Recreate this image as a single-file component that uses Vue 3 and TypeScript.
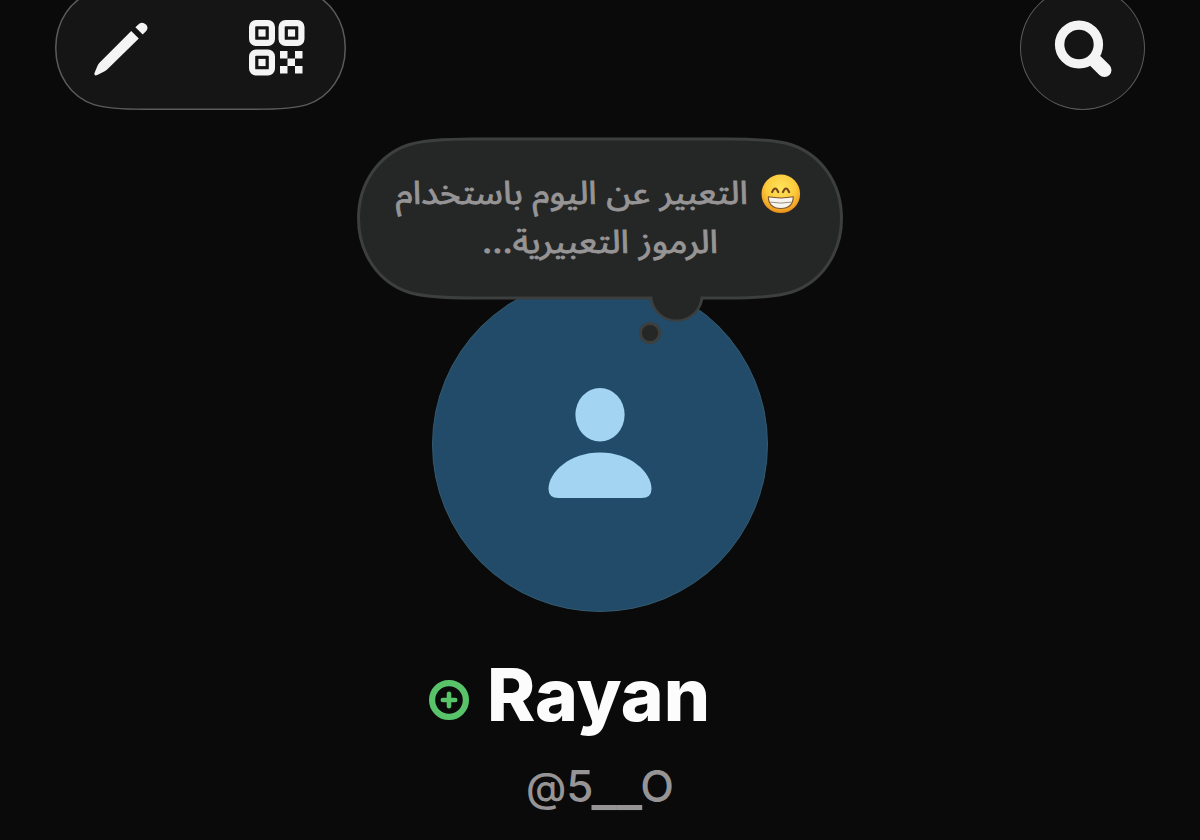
<script setup lang="ts">
interface BubbleLine {
  text: string
  x: number
  y: number
  width: number
}

const displayName: string = 'Rayan'
const bubbleLines: BubbleLine[] = [
  { text: 'التعبير عن اليوم باستخدام', x: 214.8, y: 66.5, width: 352 },
  { text: 'الرموز التعبيرية...', x: 243, y: 115.5, width: 236 },
]
const finderOrigins: [number, number][] = [[0, 0], [29.5, 0], [0, 29.5]]
const dataCells: [number, number][] = [[31, 31], [46, 31], [38.5, 38.5], [31, 46], [46, 46]]
</script>

<template>
  <main class="screen">
    <header class="toolbar">
      <div class="actions">
        <svg class="outline" viewBox="0 0 291 124" aria-hidden="true">
          <path d="M.75 62C.75 35 16 13 39 5.4Q53 .75 90 .75H201Q238 .75 252 5.4C275 13 290.25 35 290.25 62S275 111 252 118.6Q238 123.25 201 123.25H90Q53 123.25 39 118.6C16 111 .75 89 .75 62Z" />
        </svg>
        <button class="tool" aria-label="Edit">
          <svg width="56" height="56" viewBox="0 0 56 56" fill="#f4f4f4">
            <path d="M38.2 11L45.8 18.4L14.4 49.2Q13 50.6 11.2 51.5L4.3 55Q1 56.4 1.4 53.2L4.1 46.8Q5 44.3 6.5 42.7Z" />
            <path d="M42.4 7.2L46.2 3.8Q49.5 1.2 52.9 4.4Q56 7.6 53.2 10.9L49.7 14.4Z" />
          </svg>
        </button>
        <button class="tool" aria-label="QR code">
          <svg width="56" height="56" viewBox="0 0 56 56" fill="#f4f4f4">
            <g v-for="([x, y], i) in finderOrigins" :key="i" :transform="`translate(${x} ${y})`">
              <rect x="3.1" y="3.1" width="19.8" height="19.8" rx="4" fill="none" stroke="#f4f4f4" stroke-width="6.2" />
              <rect x="9.4" y="9.4" width="7.2" height="7.2" />
            </g>
            <rect v-for="([x, y], i) in dataCells" :key="`c${i}`" :x="x" :y="y" width="7.5" height="7.5" />
          </svg>
        </button>
      </div>
      <button class="search" aria-label="Search">
        <svg width="60" height="60" viewBox="0 0 60 60" fill="none" stroke="#f4f4f4">
          <circle cx="26" cy="26.5" r="19.4" stroke-width="9.4" />
          <path d="M42.8 43.5L51.4 52" stroke-width="14.2" stroke-linecap="round" />
        </svg>
      </button>
    </header>

    <section class="profile">
      <svg class="bubble" width="486" height="208" viewBox="0 0 486 208">
        <defs>
          <radialGradient id="face" cx=".5" cy=".35" r=".68">
            <stop offset="0" stop-color="#ffe45b" />
            <stop offset=".55" stop-color="#fccb3d" />
            <stop offset=".85" stop-color="#f0a324" />
            <stop offset="1" stop-color="#dd7d18" />
          </radialGradient>
        </defs>
        <circle cx="319.5" cy="157.5" r="25.6" class="cloud" />
        <path class="cloud" d="M1.5 81.5C1.5 46 22 18 51 8Q69 2 116 2H370Q417 2 435 8C464 18 484.5 46 484.5 81.5S464 145 435 155Q417 161 370 161H116Q69 161 51 155C22 145 1.5 117 1.5 81.5Z" />
        <path class="cloud-fill" d="M295.4 158.5A24.1 24.1 0 0 0 343.6 158.5V150H295.4Z" />
        <circle cx="293" cy="196" r="9.6" class="cloud" />
        <text
          v-for="line in bubbleLines"
          :key="line.y"
          class="prompt"
          :x="line.x"
          :y="line.y"
          :textLength="line.width"
          lengthAdjust="spacingAndGlyphs"
          text-anchor="middle"
          direction="rtl"
        >{{ line.text }}</text>
        <g transform="translate(404.5 37.5)">
          <circle cx="19.3" cy="19.3" r="19.3" fill="url(#face)" />
          <path d="M10.6 17.6Q13.7 10.4 16.8 17.6M21.4 17.6Q24.5 10.4 27.6 17.6" fill="none" stroke="#75451d" stroke-width="2.2" stroke-linecap="round" />
          <path d="M6.8 22.3Q19.3 24.6 31.8 22.3Q31.5 34 19.3 34Q7.1 34 6.8 22.3Z" fill="#f7f5ee" stroke="#80552a" stroke-width="1.1" stroke-linejoin="round" />
          <path d="M8.5 27.6Q19.3 29.6 30.1 27.6" fill="none" stroke="#998f80" stroke-width="1" />
        </g>
      </svg>
      <div class="avatar">
        <svg class="person" width="104" height="110" viewBox="0 0 104 110" fill="#a3d5f3">
          <ellipse cx="52" cy="26.8" rx="24.6" ry="26.8" />
          <path d="M52 64.5C82 64.5 103.5 84 103.5 101Q103.5 110 93.5 110H10.5Q.5 110 .5 101C.5 84 22 64.5 52 64.5Z" />
        </svg>
      </div>
      <div class="identity">
        <svg class="status" width="40" height="40" viewBox="0 0 40 40" fill="none" stroke="#59c36a">
          <circle cx="20" cy="20" r="16.9" stroke-width="6.2" />
          <path d="M20 13.8V26.2M13.8 20H26.2" stroke-width="4.6" stroke-linecap="round" />
        </svg>
        <h1 class="name">{{ displayName }}</h1>
      </div>
      <p class="handle"><span class="at">@</span>5<span class="dash">__</span>O</p>
    </section>
  </main>
</template>

<style>
body {
  margin: 0;
  background: #0a0a0a;
}
</style>

<style scoped>
.screen {
  width: 1200px;
  height: 840px;
  overflow: hidden;
  background: #0a0a0a;
  font-family: Inter, "Liberation Sans", sans-serif;
}
.toolbar {
  display: flex;
  justify-content: space-between;
  height: 124px;
  margin: -14px 55px 0;
}
button {
  padding: 0;
  border: 0;
  background: none;
}
.actions {
  position: relative;
  box-sizing: border-box;
  display: flex;
  align-items: center;
  justify-content: space-between;
  width: 291px;
  padding: 0 41px 0 38px;
}
.outline {
  position: absolute;
  inset: 0;
  fill: #151515;
  stroke: #5b5b5b;
  stroke-width: 1.5;
}
.tool {
  position: relative;
  display: flex;
}
.search {
  box-sizing: border-box;
  display: flex;
  align-items: center;
  justify-content: center;
  width: 125px;
  height: 124px;
  border: 1.5px solid #5b5b5b;
  border-radius: 50%;
  background: #151515;
}
.profile {
  display: flex;
  flex-direction: column;
  align-items: center;
  padding-top: 27px;
}
.bubble {
  position: relative;
  z-index: 1;
  flex: none;
}
.cloud {
  fill: #252726;
  stroke: #3d3e3e;
  stroke-width: 3;
}
.cloud-fill {
  fill: #252726;
}
.prompt {
  fill: #969495;
  stroke: #969495;
  stroke-width: 0.9;
  font-family: Inter, "Noto Sans Arabic", sans-serif;
  font-size: 32px;
}
.avatar {
  box-sizing: border-box;
  display: flex;
  align-items: center;
  justify-content: center;
  width: 336px;
  height: 335px;
  margin-top: -68px;
  border: 1px solid #335a70;
  border-radius: 50%;
  background: #224b69;
}
.person {
  margin-bottom: 4px;
}
.identity {
  display: flex;
  align-items: center;
  gap: 18px;
  height: 90px;
  margin-top: 38px;
  margin-right: 61px;
}
.status {
  margin-top: 10px;
}
.name {
  margin: 0;
  color: #fcfcfc;
  font-size: 73px;
  font-weight: 800;
  line-height: 90px;
}
.handle {
  display: flex;
  align-items: baseline;
  margin: 18px 0 0;
  color: #969495;
  font-size: 44px;
  font-weight: 500;
  line-height: 56px;
  font-feature-settings: "calt" 0;
}
.at {
  font-size: 41px;
}
.dash {
  position: relative;
  top: 3px;
  margin: 0 -2px;
  font-size: 55px;
  line-height: 40px;
}
</style>
